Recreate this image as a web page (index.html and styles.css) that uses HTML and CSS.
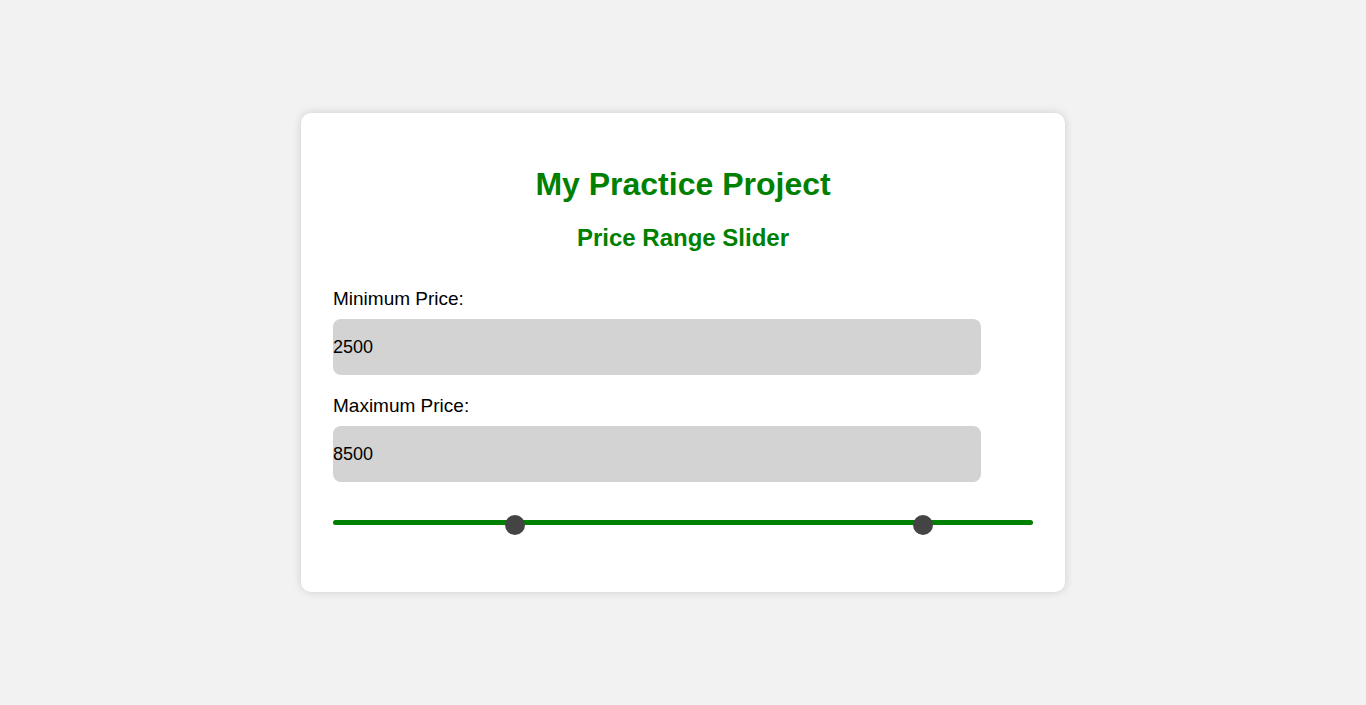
FILE: index.html
```html
<!DOCTYPE html>
<html lang="en">
<head>
<meta charset="utf-8">
<title>My Practice Project</title>
<link rel="stylesheet" href="styles.css">
</head>
<body>
<main class="card">
  <h1 class="title">My Practice Project</h1>
  <h2 class="subtitle">Price Range Slider</h2>
  <label class="field-label field-label-first" for="min">Minimum Price:</label>
  <input class="price-input" id="min" type="text" value="2500">
  <label class="field-label" for="max">Maximum Price:</label>
  <input class="price-input" id="max" type="text" value="8500">
  <div class="slider">
    <div class="track"></div>
    <span class="thumb" style="left: 172px"></span>
    <span class="thumb" style="left: 580px"></span>
  </div>
</main>
</body>
</html>
```

FILE: styles.css
```css
html, body {
  height: 100%;
}
body {
  margin: 0;
  background: #f2f2f2;
  font-family: "Liberation Sans", Arial, sans-serif;
  display: flex;
  align-items: center;
  justify-content: center;
}
.card {
  width: 700px;
  padding: 32px;
  background: #fff;
  border-radius: 10px;
  box-shadow: 0 0 10px rgba(0, 0, 0, 0.15);
  display: flow-root;
}
.title {
  margin: 21px 0;
  font-size: 32px;
  font-weight: bold;
  color: #008000;
  text-align: center;
}
.subtitle {
  margin: 21px 0 20px;
  font-size: 24px;
  font-weight: bold;
  color: #008000;
  text-align: center;
}
.field-label {
  display: block;
  font-size: 19px;
  color: #000;
  margin: 20px 0 9px;
}
.field-label-first {
  margin-top: 36px;
}
.price-input {
  display: block;
  box-sizing: border-box;
  width: 648px;
  height: 56px;
  padding: 0;
  margin: 0;
  border: none;
  border-radius: 8px;
  background: #d3d3d3;
  font-family: "Liberation Sans", Arial, sans-serif;
  font-size: 18px;
  color: #000;
  outline: none;
}
.slider {
  position: relative;
  margin: 38px 0 35px;
  height: 5px;
}
.track {
  height: 5px;
  border-radius: 3px;
  background: #008000;
}
.thumb {
  position: absolute;
  top: -5px;
  width: 20px;
  height: 20px;
  border-radius: 50%;
  background: #444;
}
```
